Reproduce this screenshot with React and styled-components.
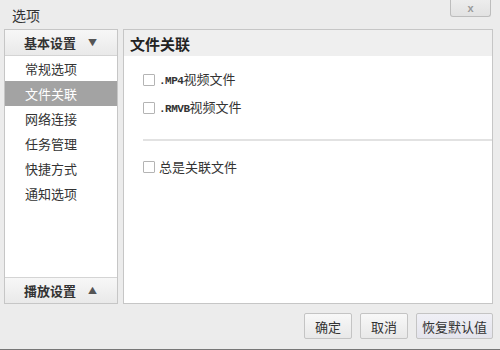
import styled, { createGlobalStyle } from 'styled-components';

const GlobalStyle = createGlobalStyle`
  html, body {
    margin: 0;
    padding: 0;
    background: #ececec;
  }
  body {
    font-family: "Noto Sans CJK SC", "Liberation Sans", sans-serif;
    color: #222;
  }
`;

const Window = styled.div`
  width: 500px;
  height: 350px;
  box-sizing: border-box;
  background: #ececec;
  display: flex;
  flex-direction: column;
  border-bottom: 1px solid #777;
`;

const TitleBar = styled.div`
  height: 29px;
  display: flex;
  align-items: flex-start;
  justify-content: space-between;
  padding: 0 9px 0 12px;
`;

const Title = styled.div`
  font-size: 14px;
  line-height: 14px;
  margin-top: 8px;
  color: #333;
`;

const CloseButton = styled.div`
  width: 41px;
  height: 17px;
  box-sizing: border-box;
  border: 1px solid #bdbdbd;
  border-top: none;
  border-radius: 0 0 3px 3px;
  background: linear-gradient(#ededed, #e2e2e2);
  color: #9a9a9a;
  font-family: "Liberation Sans", sans-serif;
  font-size: 11px;
  font-weight: bold;
  display: flex;
  align-items: center;
  justify-content: center;
`;

const Main = styled.div`
  height: 275px;
  display: flex;
  gap: 5px;
  padding: 0 7px 0 4px;
`;

const Sidebar = styled.div`
  width: 114px;
  box-sizing: border-box;
  border: 1px solid #c6c6c6;
  background: #fff;
  display: flex;
  flex-direction: column;
`;

const GroupHeader = styled.div`
  height: 26px;
  flex: none;
  box-sizing: border-box;
  background: linear-gradient(#f7f7f7, #e9e9e9);
  border-${(p) => (p.$bottom ? 'top' : 'bottom')}: 1px solid #d4d4d4;
  display: flex;
  align-items: center;
  padding-left: 19px;
  font-size: 13px;
  font-weight: bold;
  color: #333;
`;

const Arrow = styled.span`
  margin-left: 12px;
  font-size: 9px;
  color: #555;
`;

const NavList = styled.div`
  flex: 1;
  display: flex;
  flex-direction: column;
`;

const NavItem = styled.div`
  height: 25px;
  display: flex;
  align-items: center;
  padding-left: 20px;
  font-size: 13px;
  color: ${(p) => (p.$active ? '#fff' : '#333')};
  background: ${(p) => (p.$active ? '#a3a3a3' : 'transparent')};
`;

const Content = styled.div`
  flex: 1;
  box-sizing: border-box;
  border: 1px solid #c6c6c6;
  background: #fff;
  display: flex;
  flex-direction: column;
`;

const ContentHeader = styled.div`
  height: 26px;
  flex: none;
  background: #efefef;
  display: flex;
  align-items: center;
  padding-left: 6px;
  font-size: 15px;
  font-weight: bold;
  color: #222;
`;

const ContentBody = styled.div`
  padding: 10px 0 0 19px;
  display: flex;
  flex-direction: column;
`;

const CheckRow = styled.label`
  height: 28px;
  display: flex;
  align-items: center;
  font-size: 13px;
  color: #333;
`;

const Box = styled.span`
  width: 12px;
  height: 12px;
  flex: none;
  box-sizing: border-box;
  border: 1px solid #b4b4b4;
  border-radius: 1px;
  background: #fff;
  margin-right: 4px;
`;

const LabelText = styled.span`
  line-height: 28px;
`;

const Ext = styled.span`
  font-family: "Liberation Mono", monospace;
  font-size: 11px;
  font-weight: bold;
  letter-spacing: -0.5px;
`;

const Divider = styled.div`
  height: 2px;
  background: #e2e2e2;
  margin: 17px 0 12px;
`;

const Footer = styled.div`
  flex: 1;
  display: flex;
  justify-content: flex-end;
  align-items: flex-start;
  gap: 8px;
  padding: 9px 7px 0 0;
`;

const Button = styled.div`
  height: 26px;
  min-width: ${(p) => (p.$wide ? '77px' : '48px')};
  box-sizing: border-box;
  border: 1px solid #c4c4c4;
  border-radius: 2px;
  background: ${(p) =>
    p.$focused ? 'linear-gradient(#f0f0f6, #e4e4ec)' : 'linear-gradient(#f8f8f8, #e8e8e8)'};
  display: flex;
  align-items: center;
  justify-content: center;
  font-size: 13px;
  color: #333;
`;

const navItems = ['常规选项', '文件关联', '网络连接', '任务管理', '快捷方式', '通知选项'];

export default function App() {
  return (
    <>
      <GlobalStyle />
      <Window>
        <TitleBar>
          <Title>选项</Title>
          <CloseButton>x</CloseButton>
        </TitleBar>
        <Main>
          <Sidebar>
            <GroupHeader>
              基本设置<Arrow>▼</Arrow>
            </GroupHeader>
            <NavList>
              {navItems.map((item) => (
                <NavItem key={item} $active={item === '文件关联'}>
                  {item}
                </NavItem>
              ))}
            </NavList>
            <GroupHeader $bottom>
              播放设置<Arrow>▲</Arrow>
            </GroupHeader>
          </Sidebar>
          <Content>
            <ContentHeader>文件关联</ContentHeader>
            <ContentBody>
              <CheckRow>
                <Box />
                <LabelText>
                  <Ext>.MP4</Ext>视频文件
                </LabelText>
              </CheckRow>
              <CheckRow>
                <Box />
                <LabelText>
                  <Ext>.RMVB</Ext>视频文件
                </LabelText>
              </CheckRow>
              <Divider />
              <CheckRow>
                <Box />
                <LabelText>总是关联文件</LabelText>
              </CheckRow>
            </ContentBody>
          </Content>
        </Main>
        <Footer>
          <Button>确定</Button>
          <Button>取消</Button>
          <Button $wide $focused>恢复默认值</Button>
        </Footer>
      </Window>
    </>
  );
}
